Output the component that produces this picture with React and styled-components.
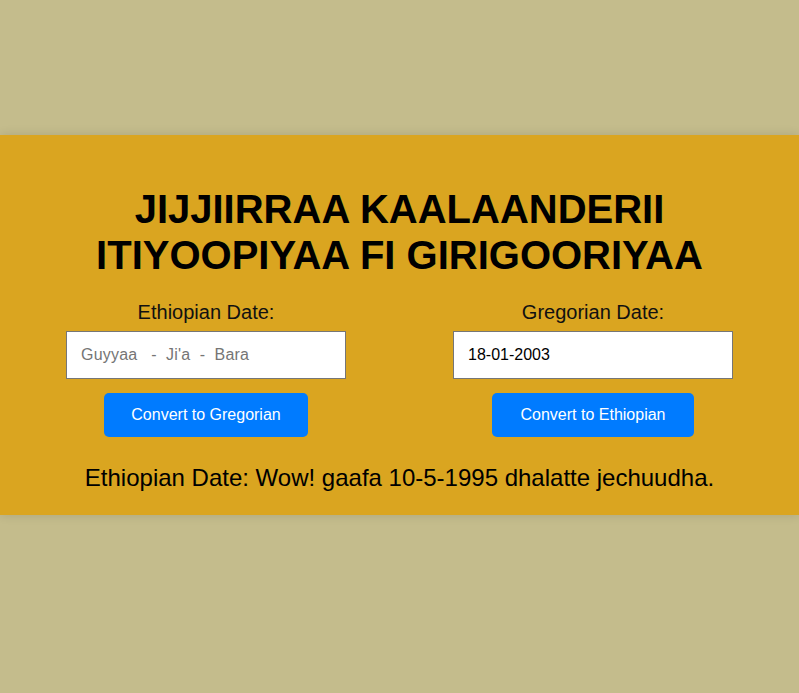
import React, { useState } from 'react';
import styled, { createGlobalStyle } from 'styled-components';

const GlobalStyle = createGlobalStyle`
  html, body {
    margin: 0;
    padding: 0;
    background: #c4bc8c;
    font-family: "Liberation Sans", Arial, sans-serif;
  }
`;

const Page = styled.div`
  padding-top: 135px;
  min-height: 693px;
  box-sizing: border-box;
`;

const Panel = styled.section`
  background: #daa520;
  box-shadow: 0 0 10px rgba(0, 0, 0, 0.12);
  padding: 51px 20px 23px;
  text-align: center;
`;

const Title = styled.h1`
  margin: 0 auto 23px;
  max-width: 640px;
  font-size: 40px;
  line-height: 46px;
  font-weight: bold;
  color: #000;
`;

const Columns = styled.div`
  display: flex;
  justify-content: center;
  gap: 107px;
`;

const Column = styled.div`
  width: 280px;
  display: flex;
  flex-direction: column;
  align-items: center;
`;

const Label = styled.label`
  font-size: 20px;
  line-height: 23px;
  color: #111;
  margin-bottom: 7px;
`;

const DateInput = styled.input`
  width: 100%;
  height: 48px;
  box-sizing: border-box;
  border: 1px solid #767676;
  padding: 0 14px;
  font-family: inherit;
  font-size: 16px;
  color: #000;
  background: #fff;
  outline: none;

  &::placeholder {
    color: #757575;
    letter-spacing: 0.2px;
  }
`;

const ConvertButton = styled.button`
  margin-top: 14px;
  height: 44px;
  padding: 0 ${p => p.$pad}px;
  border: none;
  border-radius: 5px;
  background: #007bff;
  color: #fff;
  font-family: inherit;
  font-size: 16px;
  cursor: pointer;
`;

const Result = styled.p`
  margin: 27px 0 0;
  font-size: 24px;
  line-height: 28px;
  color: #000;
`;

export default function App() {
  const [ethiopian, setEthiopian] = useState('');
  const [gregorian, setGregorian] = useState('18-01-2003');

  return (
    <Page>
      <GlobalStyle />
      <Panel>
        <Title>JIJJIIRRAA KAALAANDERII ITIYOOPIYAA FI GIRIGOORIYAA</Title>
        <Columns>
          <Column>
            <Label htmlFor="eth">Ethiopian Date:</Label>
            <DateInput
              id="eth"
              placeholder="Guyyaa   -  Ji'a  -  Bara"
              value={ethiopian}
              onChange={e => setEthiopian(e.target.value)}
            />
            <ConvertButton $pad={27.5}>Convert to Gregorian</ConvertButton>
          </Column>
          <Column>
            <Label htmlFor="greg">Gregorian Date:</Label>
            <DateInput
              id="greg"
              value={gregorian}
              onChange={e => setGregorian(e.target.value)}
            />
            <ConvertButton $pad={28.5}>Convert to Ethiopian</ConvertButton>
          </Column>
        </Columns>
        <Result>Ethiopian Date: Wow! gaafa 10-5-1995 dhalatte jechuudha.</Result>
      </Panel>
    </Page>
  );
}
